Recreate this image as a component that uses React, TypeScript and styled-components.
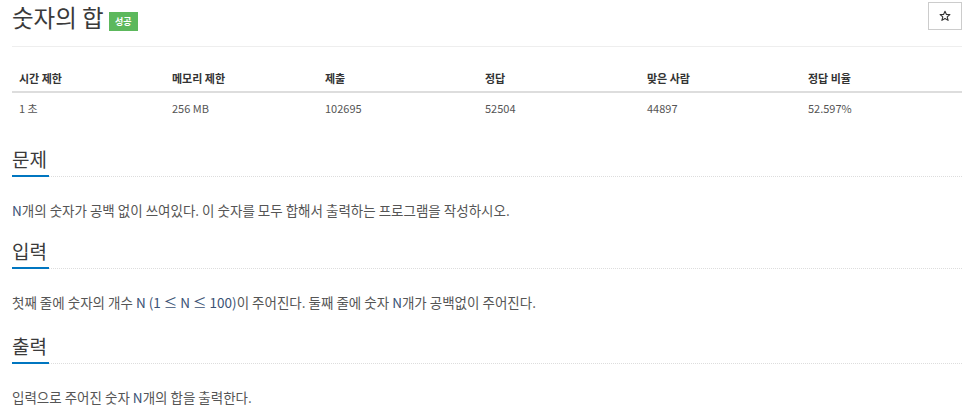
import React from 'react'
import styled, { createGlobalStyle } from 'styled-components'

const GlobalStyle = createGlobalStyle`
    html, body {
        margin: 0;
        padding: 0;
        background: #fff;
    }
    body {
        font-family: "Noto Sans CJK KR", "Noto Sans", sans-serif;
        color: #555;
    }
`

type Stat = { label: string, value: string }

const stats: Stat[] = [
    { label: '시간 제한', value: '1 초' },
    { label: '메모리 제한', value: '256 MB' },
    { label: '제출', value: '102695' },
    { label: '정답', value: '52504' },
    { label: '맞은 사람', value: '44897' },
    { label: '정답 비율', value: '52.597%' },
]

const Page = styled.div`
    padding: 0 6px 0 12px;
    width: 950px;
`

const Header = styled.div`
    display: flex;
    align-items: flex-start;
    justify-content: space-between;
    height: 46px;
    border-bottom: 1px solid #eee;
`

const TitleRow = styled.div`
    display: flex;
    align-items: center;
    gap: 5px;
`

const Title = styled.h1`
    margin: 0;
    font-size: 23.5px;
    font-weight: 400;
    color: #3a3a3a;
    line-height: 34px;
`

const Badge = styled.span`
    display: inline-flex;
    align-items: center;
    justify-content: center;
    background: #5cb85c;
    color: #fff;
    font-size: 9px;
    font-weight: 700;
    width: 29px;
    height: 19px;
    margin-top: 8px;
`

const StarButton = styled.button`
    width: 34px;
    height: 28px;
    margin-top: 2px;
    background: #fff;
    border: 1px solid #ccc;
    display: flex;
    align-items: center;
    justify-content: center;
    padding: 0;
    cursor: pointer;
`

const StatTable = styled.div`
    display: grid;
    grid-template-columns: 153px 153px 160px 162px 161px 1fr;
    margin-top: 20px;
    font-size: 11px;
`

const HeadCell = styled.div`
    padding: 0 7px;
    height: 24px;
    line-height: 22px;
    font-weight: 700;
    color: #333;
    border-bottom: 2px solid #ddd;
`

const DataCell = styled.div`
    padding: 0 7px;
    height: 31px;
    line-height: 31px;
    color: #555;
`

const Section = styled.section<{ $top: number }>`
    margin-top: ${p => p.$top}px;
`

const SectionHead = styled.div`
    display: flex;
    align-items: flex-end;
    border-bottom: 1px dotted #ddd;
`

const SectionTitle = styled.h2`
    margin: 0 0 -1px;
    font-size: 19px;
    font-weight: 400;
    color: #3a3a3a;
    line-height: 32px;
    padding-right: 2px;
    border-bottom: 2px solid #0076c0;
`

const Body = styled.p`
    margin: 23px 0 0;
    font-size: 13.5px;
    line-height: 20px;
    color: #555;
`

const Var = styled.span`
    color: #3b5275;
`

function Star() {
    return (
        <svg width="12" height="12" viewBox="0 0 24 24" fill="none" stroke="#333" strokeWidth="2.2" strokeLinejoin="round">
            <polygon points="12,2.5 14.9,9 21.8,9.3 16.4,13.8 18.2,20.7 12,16.9 5.8,20.7 7.6,13.8 2.2,9.3 9.1,9" />
        </svg>
    )
}

export default function App() {
    return (
        <Page>
            <GlobalStyle />
            <Header>
                <TitleRow>
                    <Title>숫자의 합</Title>
                    <Badge>성공</Badge>
                </TitleRow>
                <StarButton aria-label="즐겨찾기">
                    <Star />
                </StarButton>
            </Header>

            <StatTable>
                {stats.map(s => <HeadCell key={s.label}>{s.label}</HeadCell>)}
                {stats.map(s => <DataCell key={s.label}>{s.value}</DataCell>)}
            </StatTable>

            <Section $top={19}>
                <SectionHead>
                    <SectionTitle>문제</SectionTitle>
                </SectionHead>
                <Body>
                    <Var>N</Var>개의 숫자가 공백 없이 쓰여있다. 이 숫자를 모두 합해서 출력하는 프로그램을 작성하시오.
                </Body>
            </Section>

            <Section $top={15}>
                <SectionHead>
                    <SectionTitle>입력</SectionTitle>
                </SectionHead>
                <Body>
                    첫째 줄에 숫자의 개수 <Var>N (1 ≤ N ≤ 100)</Var>이 주어진다. 둘째 줄에 숫자 <Var>N</Var>개가 공백없이 주어진다.
                </Body>
            </Section>

            <Section $top={18}>
                <SectionHead>
                    <SectionTitle>출력</SectionTitle>
                </SectionHead>
                <Body>
                    입력으로 주어진 숫자 <Var>N</Var>개의 합을 출력한다.
                </Body>
            </Section>
        </Page>
    )
}
